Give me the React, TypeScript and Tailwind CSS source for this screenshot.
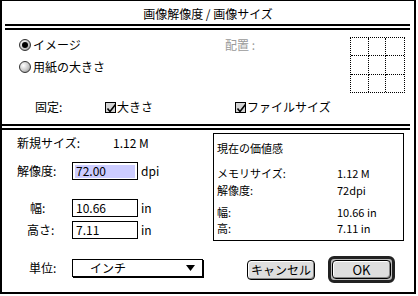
import React from 'react';

const font = "font-['Noto_Sans_CJK_JP',sans-serif]";

function DoubleRule({ className = '' }: { className?: string }) {
  return (
    <div className={`flex flex-col gap-[2px] ${className}`}>
      <div className="h-[2px] bg-black" />
      <div className="h-[2px] bg-black" />
    </div>
  );
}

function Radio({ checked, label }: { checked?: boolean; label: string }) {
  return (
    <div className="flex h-[14px] items-center gap-[2px]">
      <span className="flex h-[12px] w-[12px] items-center justify-center rounded-full border border-[#333] bg-[radial-gradient(circle_at_35%_35%,#ffffff,#c8c8c8_55%,#7a7a7a)]">
        {checked && <span className="h-[6px] w-[6px] rounded-full bg-black" />}
      </span>
      <span className="text-[12px] leading-none">{label}</span>
    </div>
  );
}

function Check({ label }: { label: string }) {
  return (
    <div className="flex items-center gap-[1px]">
      <span className="relative h-[11px] w-[11px] border border-black bg-[#d4d4d4]">
        <svg viewBox="0 0 11 11" className="absolute left-0 top-0 h-[11px] w-[11px]">
          <path d="M1.5 5.5 L4 8.5 L9.5 1.5" fill="none" stroke="black" strokeWidth="1.6" />
        </svg>
      </span>
      <span className="text-[12px] leading-none">{label}</span>
    </div>
  );
}

function Field({ label, labelPad, value, unit, selected }: { label: string; labelPad: string; value: string; unit: string; selected?: boolean }) {
  return (
    <div className="flex h-[18px] items-center">
      <span className={`w-[70px] text-[12px] leading-none ${labelPad}`}>{label}</span>
      <div className="flex h-[18px] w-[66px] items-center border border-black px-[2px]">
        <span className={`flex h-[13px] w-full items-center pl-[1px] text-[12px] leading-none ${selected ? 'bg-[#ccccff]' : ''}`}>{value}</span>
      </div>
      <span className="pl-[3px] text-[12px] leading-none">{unit}</span>
    </div>
  );
}

function InfoRow({ label, value }: { label: string; value: string }) {
  return (
    <div className="flex h-[14px] items-center text-[11px] leading-none">
      <span className="w-[120px]">{label}</span>
      <span>{value}</span>
    </div>
  );
}

export default function App() {
  return (
    <div className={`h-[296px] w-[418px] bg-white text-black ${font}`}>
      <div className="flex h-[294px] w-[416px] flex-col border-b-2 border-l-2 border-r-2 border-t border-black">
        <div className="flex h-[23px] items-center justify-center pt-[2px] text-[12px]">画像解像度 / 画像サイズ</div>
        <DoubleRule className="ml-[3px] mr-[4px]" />

        <div className="flex h-[94px] flex-col">
          <div className="flex h-[64px]">
            <div className="flex w-[223px] flex-col gap-[8px] pl-[17px] pt-[8px]">
              <Radio checked label="イメージ" />
              <Radio label="用紙の大きさ" />
            </div>
            <div className="w-[125px] pt-[9px] text-[12px] leading-none text-[#9a9a9a]">配置 :</div>
            <div className="mt-[7px] grid h-[56px] w-[55px] grid-cols-3 border border-dotted border-black">
              {Array.from({ length: 9 }).map((_, i) => (
                <div
                  key={i}
                  className={`border-dotted border-black ${i % 3 !== 2 ? 'border-r' : ''} ${i < 6 ? 'border-b' : ''}`}
                />
              ))}
            </div>
          </div>
          <div className="flex h-[26px] items-center">
            <span className="w-[103px] pl-[33px] text-[12px] leading-none">固定:</span>
            <div className="w-[130px]">
              <Check label="大きさ" />
            </div>
            <Check label="ファイルサイズ" />
          </div>
        </div>

        <DoubleRule className="mr-[4px]" />

        <div className="flex flex-1">
          <div className="flex w-[211px] flex-col">
            <div className="mt-[5px] flex h-[16px] items-center text-[12px] leading-none">
              <span className="w-[111px] pl-[15px]">新規サイズ:</span>
              <span>1.12 M</span>
            </div>
            <div className="mt-[11px]">
              <Field label="解像度:" labelPad="pl-[15px]" value="72.00" unit="dpi" selected />
            </div>
            <div className="mt-[19px]">
              <Field label="幅:" labelPad="pl-[28px]" value="10.66" unit="in" />
            </div>
            <div className="mt-[4px]">
              <Field label="高さ:" labelPad="pl-[25px]" value="7.11" unit="in" />
            </div>
            <div className="mt-[20px] flex h-[18px] items-center">
              <span className="w-[70px] pl-[27px] text-[12px] leading-none">単位:</span>
              <div className="flex h-[18px] w-[131px] items-center border border-black pl-[17px] pr-[7px] shadow-[1px_1px_0_#000]">
                <span className="flex-1 text-[12px] leading-none">インチ</span>
                <svg viewBox="0 0 9 6" className="h-[6px] w-[9px]">
                  <path d="M0 0 H9 L4.5 6 Z" fill="black" />
                </svg>
              </div>
            </div>
          </div>

          <div className="flex flex-col">
            <div className="mt-[3px] flex h-[108px] w-[191px] flex-col border border-black pl-[3px]">
              <div className="mt-[7px] flex h-[15px] items-center text-[11px] leading-none">現在の価値感</div>
              <div className="mt-[10px]">
                <InfoRow label="メモリサイズ:" value="1.12 M" />
              </div>
              <div className="mt-[3px]">
                <InfoRow label="解像度:" value="72dpi" />
              </div>
              <div className="mt-[8px]">
                <InfoRow label="幅:" value="10.66 in" />
              </div>
              <div className="mt-[2px]">
                <InfoRow label="高:" value="7.11 in" />
              </div>
            </div>
            <div className="mt-[15px] flex items-center">
              <button className="ml-[34px] flex h-[20px] w-[68px] items-center justify-center rounded-[4px] border border-black bg-[#dedede] text-[12px] leading-none shadow-[inset_1px_1px_0_#fff,inset_-1px_-1px_0_#888]">
                キャンセル
              </button>
              <div className="ml-[13px] flex h-[27px] w-[67px] items-center justify-center rounded-[6px] border-[3px] border-[#222] bg-[#bbbbbb] p-[1px]">
                <button className="flex h-full w-full items-center justify-center rounded-[4px] border border-black bg-[#dedede] text-[13px] leading-none shadow-[inset_1px_1px_0_#fff,inset_-1px_-1px_0_#888]">
                  OK
                </button>
              </div>
            </div>
          </div>
        </div>
      </div>
    </div>
  );
}
